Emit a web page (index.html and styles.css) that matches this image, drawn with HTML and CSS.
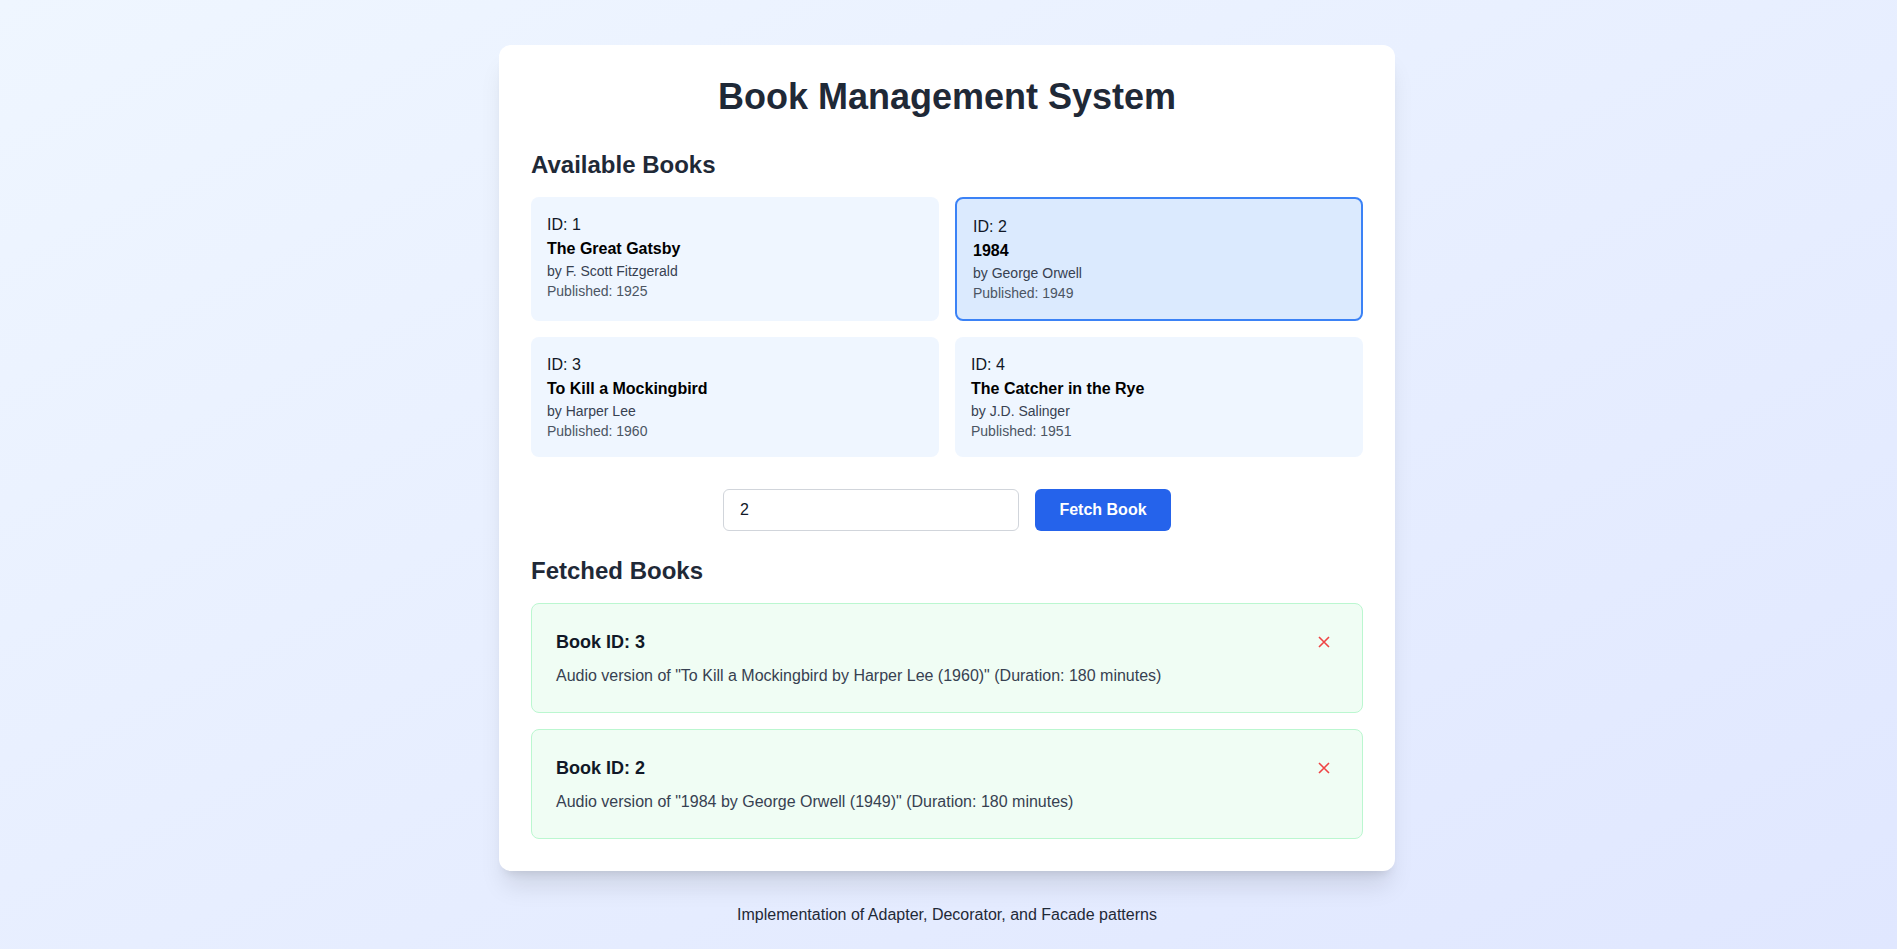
FILE: index.html
```html
<!DOCTYPE html>
<html lang="en">
<head>
<meta charset="utf-8">
<title>Book Management System</title>
<link rel="stylesheet" href="styles.css">
</head>
<body>
<main class="panel">
  <h1 class="title">Book Management System</h1>

  <h2 class="section-title">Available Books</h2>
  <div class="book-grid">
    <div class="book">
      <div class="book-id">ID: 1</div>
      <div class="book-name">The Great Gatsby</div>
      <div class="book-author">by F. Scott Fitzgerald</div>
      <div class="book-year">Published: 1925</div>
    </div>
    <div class="book book-selected">
      <div class="book-id">ID: 2</div>
      <div class="book-name">1984</div>
      <div class="book-author">by George Orwell</div>
      <div class="book-year">Published: 1949</div>
    </div>
    <div class="book">
      <div class="book-id">ID: 3</div>
      <div class="book-name">To Kill a Mockingbird</div>
      <div class="book-author">by Harper Lee</div>
      <div class="book-year">Published: 1960</div>
    </div>
    <div class="book">
      <div class="book-id">ID: 4</div>
      <div class="book-name">The Catcher in the Rye</div>
      <div class="book-author">by J.D. Salinger</div>
      <div class="book-year">Published: 1951</div>
    </div>
  </div>

  <div class="fetch-row">
    <input class="fetch-input" type="text" value="2">
    <button class="fetch-btn">Fetch Book</button>
  </div>

  <h2 class="section-title fetched-title">Fetched Books</h2>
  <div class="fetched-list">
    <div class="fetched">
      <div class="fetched-head">
        <span class="fetched-id">Book ID: 3</span>
        <button class="remove-btn" aria-label="Remove">
          <svg width="12" height="12" viewBox="0 0 12 12"><path d="M1 1L11 11M11 1L1 11" stroke="#ef4444" stroke-width="1.6" fill="none"/></svg>
        </button>
      </div>
      <p class="fetched-desc">Audio version of "To Kill a Mockingbird by Harper Lee (1960)" (Duration: 180 minutes)</p>
    </div>
    <div class="fetched">
      <div class="fetched-head">
        <span class="fetched-id">Book ID: 2</span>
        <button class="remove-btn" aria-label="Remove">
          <svg width="12" height="12" viewBox="0 0 12 12"><path d="M1 1L11 11M11 1L1 11" stroke="#ef4444" stroke-width="1.6" fill="none"/></svg>
        </button>
      </div>
      <p class="fetched-desc">Audio version of "1984 by George Orwell (1949)" (Duration: 180 minutes)</p>
    </div>
  </div>
</main>
<footer class="footer">Implementation of Adapter, Decorator, and Facade patterns</footer>
</body>
</html>
```

FILE: styles.css
```css
* { box-sizing: border-box; }

html, body { margin: 0; }

body {
  min-height: 100vh;
  padding: 45px 3px 0 0;
  font-family: "Liberation Sans", Arial, sans-serif;
  color: #1f2937;
  background: linear-gradient(to bottom right, #eff6ff, #e0e7ff);
}

.panel {
  width: 896px;
  margin: 0 auto;
  background: #ffffff;
  border-radius: 12px;
  padding: 32px;
  box-shadow: 0 20px 25px -5px rgba(0, 0, 0, 0.1), 0 8px 10px -6px rgba(0, 0, 0, 0.1);
}

.title {
  margin: 0 0 32px;
  font-size: 36px;
  line-height: 40px;
  font-weight: 700;
  text-align: center;
  color: #1f2937;
}

.section-title {
  margin: 0 0 16px;
  font-size: 24px;
  line-height: 32px;
  font-weight: 700;
  color: #1f2937;
}

.book-grid {
  display: grid;
  grid-template-columns: 1fr 1fr;
  gap: 16px;
}

.book {
  background: #eff6ff;
  border-radius: 8px;
  padding: 16px;
}

.book-selected {
  background: #dbeafe;
  border: 2px solid #3b82f6;
}

.book-id {
  font-size: 16px;
  line-height: 24px;
  color: #111827;
}

.book-name {
  font-size: 16px;
  line-height: 24px;
  font-weight: 700;
  color: #000000;
}

.book-author {
  font-size: 14px;
  line-height: 20px;
  color: #374151;
}

.book-year {
  font-size: 14px;
  line-height: 20px;
  color: #4b5563;
}

.fetch-row {
  margin-top: 32px;
  display: flex;
  justify-content: center;
  gap: 16px;
}

.fetch-input {
  width: 296px;
  height: 42px;
  padding: 0 16px;
  border: 1px solid #d1d5db;
  border-radius: 6px;
  font-family: inherit;
  font-size: 16px;
  color: #111827;
  background: #ffffff;
  outline: none;
}

.fetch-btn {
  width: 136px;
  height: 42px;
  border: none;
  border-radius: 6px;
  background: #2563eb;
  color: #ffffff;
  font-family: inherit;
  font-size: 16px;
  font-weight: 700;
  cursor: pointer;
}

.fetched-title {
  margin-top: 24px;
}

.fetched-list {
  display: flex;
  flex-direction: column;
  gap: 16px;
}

.fetched {
  background: #f0fdf4;
  border: 1px solid #bbf7d0;
  border-radius: 8px;
  padding: 24px;
}

.fetched-head {
  display: flex;
  justify-content: space-between;
  align-items: center;
}

.fetched-id {
  font-size: 18px;
  line-height: 28px;
  font-weight: 700;
  color: #111827;
}

.remove-btn {
  display: flex;
  align-items: center;
  justify-content: center;
  padding: 0;
  margin-right: 8px;
  border: none;
  background: none;
  cursor: pointer;
}

.fetched-desc {
  margin: 8px 0 0;
  font-size: 16px;
  line-height: 24px;
  color: #374151;
}

.footer {
  margin-top: 32px;
  text-align: center;
  font-size: 16px;
  line-height: 24px;
  color: #1f2937;
}
```
